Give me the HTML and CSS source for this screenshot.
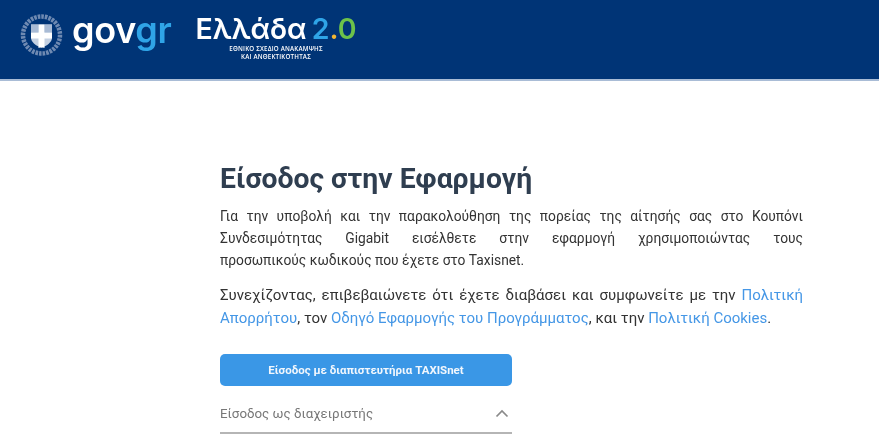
FILE: index.html
```html
<!DOCTYPE html>
<html lang="el">
<head>
<meta charset="utf-8">
<title>Είσοδος στην Εφαρμογή</title>
<link rel="stylesheet" href="styles.css">
</head>
<body>
<div class="page">
<header class="topbar">
  <div class="emblem">
    <svg width="44" height="44" viewBox="0 0 44 44">
      <circle cx="21.500" cy="21" r="18.500" fill="none" stroke="#6f8ab2" stroke-width="4.500" stroke-dasharray="2.600 1"/>
      <path d="M11 10.500h21v13c0 5-5 8-10.500 10.500c-5.500-2.500-10.500-5.500-10.500-10.500z" fill="#c3d0e2"/>
      <path d="M18.500 10.500h6v8h7.500v6h-7.500v9.500l-3 -1l-3 1v-9.500h-7.500v-6h7.500z" fill="#fff"/>
      <path d="M11 10.500h7.500v8h-7.500zM24.500 10.500h7.500v8h-7.500z" fill="#a9bbd5"/>
    </svg>
  </div>
  <div class="gov">gov<span class="gov-accent">gr</span></div>
  <div class="greece">
    <div class="greece-title">Ελλάδα <span class="two">2</span><span class="dot">.</span><span class="zero">0</span></div>
    <div class="greece-sub">ΕΘΝΙΚΟ ΣΧΕΔΙΟ ΑΝΑΚΑΜΨΗΣ<br>ΚΑΙ ΑΝΘΕΚΤΙΚΟΤΗΤΑΣ</div>
  </div>
</header>
<main class="content">
  <h1 class="title">Είσοδος στην Εφαρμογή</h1>
  <p class="para para-first">Για την υποβολή και την παρακολούθηση της πορείας της αίτησής σας στο Κουπόνι Συνδεσιμότητας Gigabit εισέλθετε στην εφαρμογή χρησιμοποιώντας τους προσωπικούς&nbsp;κωδικούς που έχετε στο Taxisnet.</p>
  <p class="para para-second">Συνεχίζοντας, επιβεβαιώνετε ότι έχετε διαβάσει και συμφωνείτε με την <a href="#">Πολιτική Απορρήτου</a>, τον <a href="#">Οδηγό Εφαρμογής του Προγράμματος</a>, και την <a href="#">Πολιτική Cookies</a>.</p>
  <div class="actions">
    <button class="login" type="button">Είσοδος με διαπιστευτήρια TAXISnet</button>
    <div class="admin">
      <span>Είσοδος ως διαχειριστής</span>
      <svg class="chev" width="14" height="9" viewBox="0 0 14 9"><path d="M1.500 7.500L7 2l5.500 5.500" fill="none" stroke="#8a8a8a" stroke-width="1.700"/></svg>
    </div>
  </div>
</main>
</div>
</body>
</html>
```
FILE: styles.css
```css
html, body { margin: 0; padding: 0; }
body {
  height: 440px;
  overflow: hidden;
  background: #fff;
  font-family: Roboto, "Liberation Sans", sans-serif;
  color: #333;
}
.page { filter: blur(.35px); }
.topbar {
  height: 79px;
  background: #003476;
  border-bottom: 2px solid #a9bcd6;
  display: flex;
  align-items: flex-start;
  padding-left: 20px;
}
.emblem { margin-top: 14px; width: 44px; height: 44px; }
.gov {
  margin: 8px 0 0 8px;
  font-family: Inter, sans-serif;
  font-weight: 600;
  font-size: 36px;
  line-height: 44px;
  color: #fff;
  width: 124px;
  letter-spacing: -.3px;
}
.gov-accent { color: #2fa4e7; }
.greece { display: flex; flex-direction: column; align-items: center; width: 160px; margin-top: 11px; }
.greece-title {
  font-family: Inter, sans-serif;
  font-weight: 600;
  font-size: 28.500px;
  line-height: 36px;
  word-spacing: -2px;
  color: #fff;
  white-space: nowrap;
}
.two { color: #2fa4e7; }
.dot { color: #f2b632; }
.zero { color: #6cc24a; }
.greece-sub {
  font-family: "Open Sans", sans-serif;
  font-size: 6.200px;
  font-weight: 600;
  line-height: 7.500px;
  color: #fff;
  text-align: center;
  margin-top: -2px;
  letter-spacing: .2px;
}
.content { width: 583px; margin: 0 0 0 220px; padding-top: 80px; }
.title {
  margin: 0 0 8px;
  font-size: 28.300px;
  font-weight: 700;
  line-height: 36px;
  color: #2f3e50;
}
.para {
  margin: 0 0 13px;
  text-align: justify;
  color: #333;
}
.para-first { font-size: 13.800px; line-height: 22px; }
.para-second { font-size: 15px; line-height: 23px; }
.para a { color: #4597e6; text-decoration: none; }
.actions { width: 292px; margin-top: 24px; }
.login {
  display: block;
  width: 100%;
  height: 32px;
  border: 0;
  border-radius: 5px;
  background: #3a97e6;
  color: #f2f7fd;
  font-family: Roboto, sans-serif;
  font-size: 11.500px;
  font-weight: 700;
}
.admin {
  margin-top: 13px;
  height: 29px;
  display: flex;
  justify-content: space-between;
  align-items: center;
  padding: 0 3px 4px 0;
  border-bottom: 2px solid #b5b5b5;
  font-size: 13.300px;
  color: #777;
}
```
